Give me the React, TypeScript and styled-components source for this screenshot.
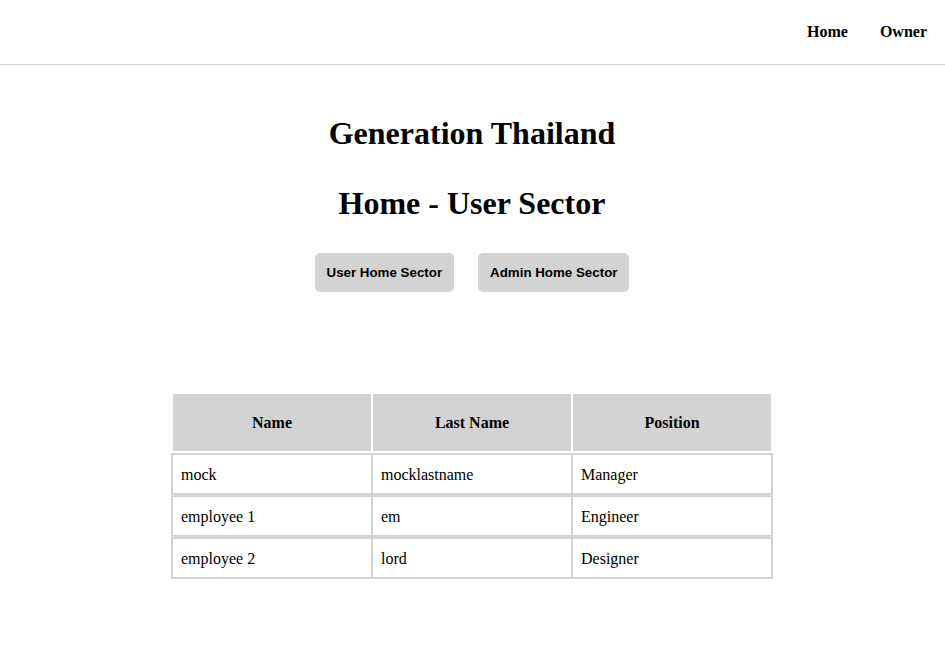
import React from "react"
import styled, { createGlobalStyle } from "styled-components"

const GlobalStyle = createGlobalStyle`
  html, body {
    margin: 0;
    padding: 0;
    background: #ffffff;
    color: #000000;
    font-family: "Liberation Serif", "Times New Roman", serif;
  }
`

const NavBar = styled.nav`
  height: 64px;
  border-bottom: 1px solid #d3d3d3;
  display: flex;
  align-items: center;
  justify-content: flex-end;
  gap: 32px;
  padding-right: 18px;
`

const NavLink = styled.a`
  font-size: 16px;
  font-weight: bold;
  color: #000000;
  text-decoration: none;
  line-height: 18px;
  margin-top: -1px;
`

const Main = styled.main`
  display: flex;
  flex-direction: column;
  align-items: center;
  padding: 50px 1px 0 0;
`

const Title = styled.h1`
  margin: 0;
  font-size: 32px;
  line-height: 37px;
  font-weight: bold;
  text-align: center;
`

const SubTitle = styled(Title)`
  margin-top: 33px;
`

const ButtonRow = styled.div`
  display: flex;
  gap: 24px;
  margin-top: 31px;
`

const SectorButton = styled.button`
  height: 39px;
  padding: 0 12px;
  border: none;
  border-radius: 5px;
  background: #d3d3d3;
  color: #000000;
  font-family: "Liberation Sans", Arial, sans-serif;
  font-size: 13.333px;
  font-weight: bold;
  cursor: pointer;
`

const Table = styled.table`
  margin-top: 100px;
  border-collapse: separate;
  border-spacing: 0;
  table-layout: fixed;
  width: 602px;
  font-size: 16px;
`

const HeadCell = styled.th<{ $first?: boolean }>`
  box-sizing: border-box;
  width: ${(p) => (p.$first ? "202px" : "200px")};
  height: 61px;
  padding: 0;
  background: #d3d3d3;
  border: 2px solid #ffffff;
  border-left: ${(p) => (p.$first ? "2px solid #ffffff" : "none")};
  font-weight: bold;
  text-align: center;
  vertical-align: middle;
`

const BodyCell = styled.td<{ $first?: boolean }>`
  padding: 11px 8px 9px;
  line-height: 18px;
  border: 2px solid #d3d3d3;
  border-left: ${(p) => (p.$first ? "2px solid #d3d3d3" : "none")};
  text-align: left;
`

const employees = [
  { name: "mock", lastName: "mocklastname", position: "Manager" },
  { name: "employee 1", lastName: "em", position: "Engineer" },
  { name: "employee 2", lastName: "lord", position: "Designer" },
]

export default function App() {
  return (
    <>
      <GlobalStyle />
      <NavBar>
        <NavLink href="#">Home</NavLink>
        <NavLink href="#">Owner</NavLink>
      </NavBar>
      <Main>
        <Title>Generation Thailand</Title>
        <SubTitle>Home - User Sector</SubTitle>
        <ButtonRow>
          <SectorButton>User Home Sector</SectorButton>
          <SectorButton>Admin Home Sector</SectorButton>
        </ButtonRow>
        <Table>
          <thead>
            <tr>
              <HeadCell $first>Name</HeadCell>
              <HeadCell>Last Name</HeadCell>
              <HeadCell>Position</HeadCell>
            </tr>
          </thead>
          <tbody>
            {employees.map((e) => (
              <tr key={e.name}>
                <BodyCell $first>{e.name}</BodyCell>
                <BodyCell>{e.lastName}</BodyCell>
                <BodyCell>{e.position}</BodyCell>
              </tr>
            ))}
          </tbody>
        </Table>
      </Main>
    </>
  )
}
